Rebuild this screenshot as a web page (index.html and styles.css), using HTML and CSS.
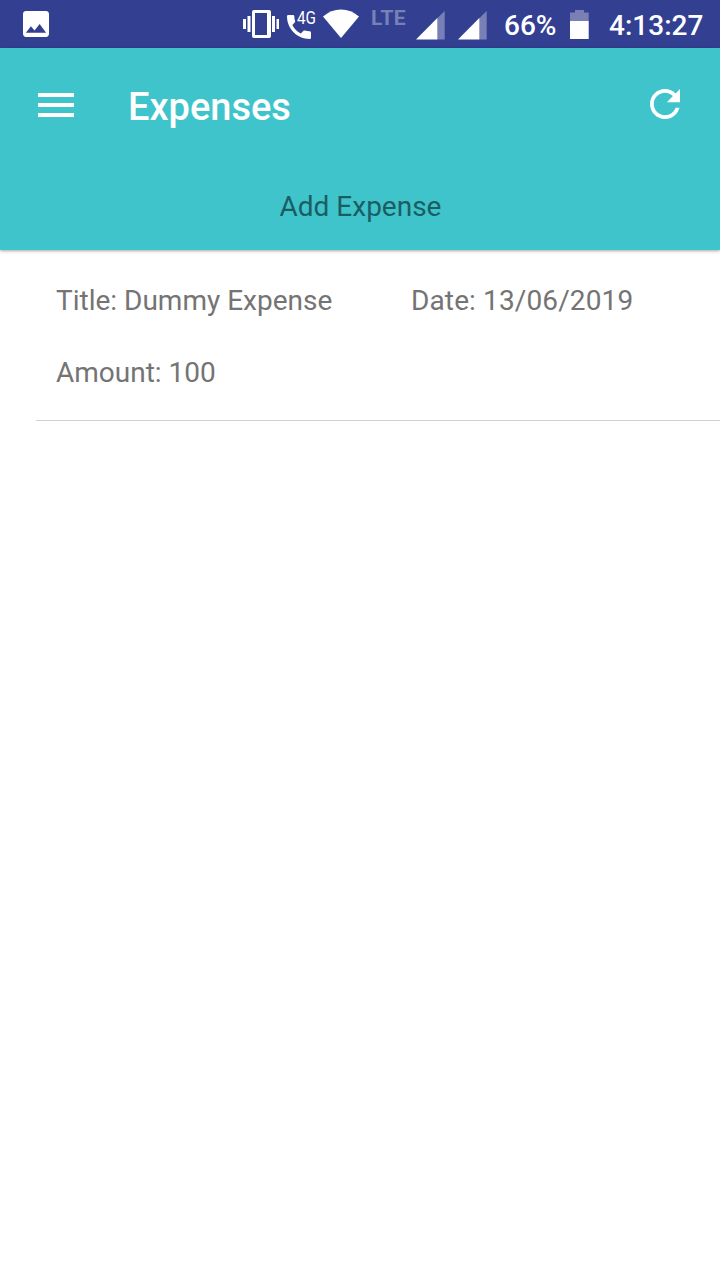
FILE: index.html
```
<!DOCTYPE html>
<html lang="en">
<head>
<meta charset="utf-8">
<title>Expenses</title>
<link rel="stylesheet" href="styles.css">
</head>
<body>
<div class="status-bar">
  <svg class="icon-gallery" width="26" height="26" viewBox="3 3 18 18"><path fill="#fff" d="M21 19V5c0-1.100-.9-2-2-2H5c-1.100 0-2 .9-2 2v14c0 1.100.9 2 2 2h14c1.100 0 2-.9 2-2zM8.500 13.500l2.500 3.010L14.500 12l4.500 6H5l3.500-4.500z"/></svg>
  <div class="status-icons">
    <svg class="icon-vibrate" width="36" height="48" viewBox="243 0 36 48" fill="#fff"><path fill-rule="evenodd" d="M254 10h15a2 2 0 0 1 2 2v24a2 2 0 0 1-2 2h-15a2 2 0 0 1-2-2V12a2 2 0 0 1 2-2zM255 13v22h12V13z"/><path d="M243 19h3v10h-3zM247.500 16h3v16h-3zM272 16h3v16h-3zM276.500 19h3v10h-3z"/></svg>
    <div class="call">
      <svg width="24" height="24" viewBox="3 3 18 18"><path fill="#fff" d="M7 10.500c1.440 2.830 3.600 4.900 6.400 6.400l2-2c.27-.27.670-.36 1.020-.24 1.120.37 2.330.57 3.570.57.550 0 1 .45 1 1V20c0 .55-.45 1-1 1-9.390 0-17-7.610-17-17 0-.55.45-1 1-1h3.500c.55 0 1 .45 1 1 0 1.250.2 2.450.57 3.570.11.350.030.740-.25 1.020z"/></svg>
      <span class="call-label">4G</span>
    </div>
    <svg class="icon-wifi" width="36" height="48" viewBox="323 0 36 48"><path fill="#fff" d="M341 38L323 16.500Q331 9.500 341 9.500T359 16.500z"/></svg>
    <span class="lte">LTE</span>
    <svg class="icon-signal" width="29" height="48" viewBox="0 0 29 48"><path fill="#7880b6" d="M21 18.500L28.700 11v28.500H21z"/><path fill="#fff" d="M0 39.500L21.300 18v21.500z"/></svg>
    <svg class="icon-signal second" width="29" height="48" viewBox="0 0 29 48"><path fill="#7880b6" d="M21 18.500L28.700 11v28.500H21z"/><path fill="#fff" d="M0 39.500L21.300 18v21.500z"/></svg>
    <span class="percent">66%</span>
    <svg class="icon-battery" width="19" height="48" viewBox="0 0 19 48"><path fill="#7880b6" d="M5 10h9v2.500h4.700V21H0v-8.500h5z"/><path fill="#fff" d="M0 21h18.700v18H0z"/></svg>
    <span class="clock">4:13:27</span>
  </div>
</div>
<header class="app-header">
  <div class="toolbar">
    <svg class="icon-menu" width="36" height="26" viewBox="0 0 36 26"><path fill="#fff" d="M0 1h36v4H0zM0 11h36v4H0zM0 21h36v4H0z"/></svg>
    <h1 class="title">Expenses</h1>
    <svg class="icon-refresh" width="30" height="30" viewBox="4 4 16 16"><path fill="#fff" d="M17.650 6.350C16.200 4.900 14.210 4 12 4c-4.420 0-7.990 3.580-7.990 8s3.570 8 7.990 8c3.730 0 6.840-2.550 7.730-6h-2.080c-.82 2.330-3.040 4-5.650 4-3.310 0-6-2.690-6-6s2.690-6 6-6c1.660 0 3.140.69 4.220 1.780L13 11h7V4l-2.350 2.350z"/></svg>
  </div>
  <div class="add-expense"><span>Add Expense</span></div>
</header>
<main class="expense-list">
  <div class="expense">
    <span class="cell name">Title: Dummy Expense</span>
    <span class="cell date">Date: 13/06/2019</span>
    <span class="cell amount">Amount: 100</span>
  </div>
</main>
</body>
</html>
```
FILE: styles.css
```
* { box-sizing: border-box; }
body {
  margin: 0;
  min-height: 1280px;
  background: #fff;
  font-family: Roboto, "Liberation Sans", sans-serif;
}
svg { display: block; flex: none; }
.status-bar {
  height: 48px;
  display: flex;
  align-items: center;
  justify-content: space-between;
  padding-left: 23px;
  background: #334092;
  color: #fff;
}
.status-icons {
  width: 477px;
  height: 48px;
  display: flex;
  align-items: center;
  white-space: nowrap;
}
.call {
  position: relative;
  width: 30px;
  height: 24px;
  margin: 6px 6px 0 8px;
}
.call-label {
  position: absolute;
  left: 10px;
  top: -7px;
  font-size: 18px;
  line-height: 20px;
  transform: scaleX(.85);
  transform-origin: left;
}
.lte {
  width: 45px;
  padding-left: 11px;
  margin-top: -13px;
  font-size: 21px;
  line-height: 24px;
  letter-spacing: .4px;
  font-weight: 700;
  color: #7880b6;
}
.icon-wifi { margin-right: 1px; }
.icon-signal { margin-left: 11px; }
.icon-signal.second { margin-left: 13px; }
.percent, .clock {
  font-size: 28px;
  line-height: 34px;
  font-weight: 500;
  margin-top: 3px;
}
.percent { width: 66px; margin-left: 17px; }
.clock { margin-left: 20px; }
.app-header {
  height: 202px;
  background: #40c4cc;
  box-shadow: 0 1px 3px rgba(0, 0, 0, .35);
}
.toolbar {
  height: 112px;
  display: flex;
  align-items: center;
  padding: 0 40px 0 38px;
}
.icon-menu { margin-top: 2px; }
.title {
  flex: 1;
  margin: 6px 0 0 54px;
  font-size: 38px;
  line-height: 46px;
  font-weight: 500;
  color: #fff;
}
.add-expense {
  display: flex;
  justify-content: center;
  padding: 30px 0 0 1px;
  font-size: 28px;
  line-height: 34px;
  color: #1a5e62;
}
.expense {
  display: grid;
  grid-template-columns: 355px 1fr;
  grid-template-rows: 72px 72px;
  align-items: center;
  height: 171px;
  margin-left: 36px;
  padding: 15px 0 0 20px;
  border-bottom: 1px solid #d0d0d0;
  font-size: 28px;
  line-height: 34px;
  color: #747474;
}
.date { letter-spacing: .12px; }
```
